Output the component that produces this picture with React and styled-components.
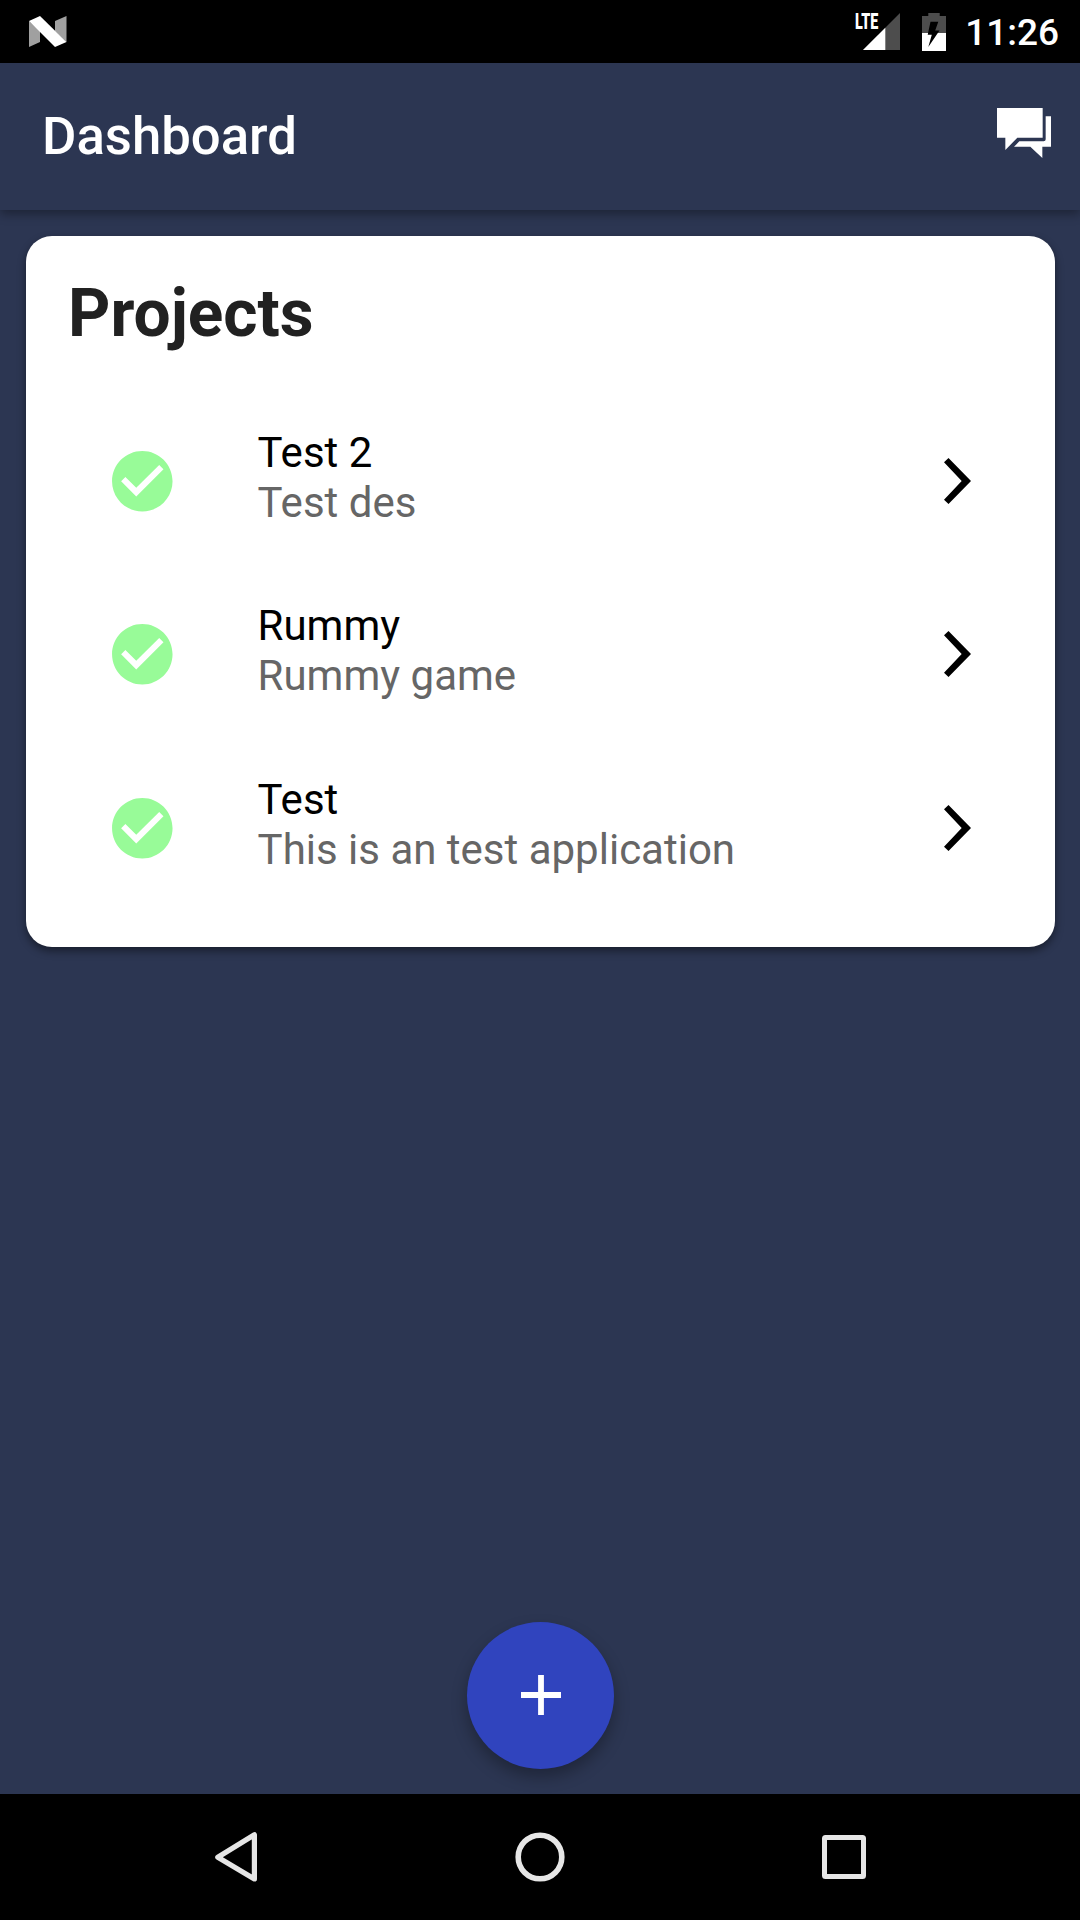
import React from "react";
import styled, { createGlobalStyle } from "styled-components";

const GlobalStyle = createGlobalStyle`
  * { box-sizing: border-box; }
  body { margin: 0; background: #2c3652; }
`;

const Screen = styled.div`
  display: flex;
  flex-direction: column;
  width: 1080px;
  height: 1920px;
  overflow: hidden;
  background: #2c3652;
  font-family: Roboto, "Liberation Sans", sans-serif;
`;

const StatusBar = styled.div`
  display: flex;
  align-items: center;
  justify-content: space-between;
  flex: none;
  height: 63px;
  padding: 0 21px 0 28px;
  background: #000;
`;

const StatusIcons = styled.div`
  display: flex;
  align-items: center;
  height: 63px;
`;

const Signal = styled.div`
  display: flex;
  align-items: flex-start;
  height: 37px;
  margin-right: 22px;
`;

const NetworkLabel = styled.span`
  width: 8px;
  color: #fff;
  font-size: 22px;
  font-weight: 900;
  line-height: 18px;
  white-space: nowrap;
  transform: scaleX(0.65);
  transform-origin: left center;
`;

const Clock = styled.span`
  margin-left: 19px;
  color: #fff;
  font-size: 37px;
  font-weight: 500;
  line-height: 44px;
  padding-top: 3px;
`;

const Header = styled.header`
  position: relative;
  display: flex;
  align-items: center;
  justify-content: space-between;
  flex: none;
  height: 147px;
  padding: 0 29px 0 42px;
  background: #2c3652;
  box-shadow: 0 4px 10px rgba(0, 0, 0, 0.35);
`;

const Title = styled.h1`
  margin: 0 0 1px;
  color: #fff;
  font-size: 52.7px;
  font-weight: 500;
  line-height: 62px;
`;

const ChatButton = styled.button`
  display: flex;
  margin: 0 0 8px;
  padding: 0;
  border: 0;
  background: none;
`;

const Content = styled.main`
  display: flex;
  flex-direction: column;
  flex: 1;
  padding: 26.3px 24.6px 25px 26.3px;
`;

const Card = styled.section`
  display: flex;
  flex-direction: column;
  height: 711px;
  padding: 39.7px 42px 0 41.7px;
  border-radius: 26px;
  background: #fff;
  box-shadow: 0 4px 8px rgba(0, 0, 0, 0.45);
`;

const CardTitle = styled.h2`
  margin: 0 0 42.4px;
  color: #212121;
  font-size: 65.8px;
  font-weight: 700;
  line-height: 76px;
`;

const ProjectRow = styled.div`
  display: flex;
  align-items: center;
  height: 173.4px;
  padding: 0 42.4px 0 38px;
`;

const ProjectText = styled.div`
  display: flex;
  flex-direction: column;
  flex: 1;
  margin: -6.6px 0 0 79px;
`;

const ProjectLine = styled.span`
  color: ${(p) => (p.$muted ? "#666" : "#000")};
  font-size: 42px;
  line-height: 50px;
`;

const FabArea = styled.div`
  display: flex;
  justify-content: center;
  margin-top: auto;
`;

const Fab = styled.button`
  display: flex;
  align-items: center;
  justify-content: center;
  width: 147px;
  height: 147px;
  padding: 0 0 1px;
  border: 0;
  border-radius: 50%;
  background: #3044be;
  box-shadow: 0 8px 16px rgba(0, 0, 0, 0.3);
`;

const NavBar = styled.nav`
  display: flex;
  align-items: center;
  justify-content: space-between;
  flex: none;
  height: 126px;
  padding: 0 214px 0 215px;
  background: #000;
`;

const projects = [
  { name: "Test 2", description: "Test des" },
  { name: "Rummy", description: "Rummy game" },
  { name: "Test", description: "This is an test application" },
];

const SystemLogo = () => (
  <svg width="39" height="31" viewBox="0 0 39 31">
    <path d="M1 5L12 15V26L1 31ZM27 5L38.5 0V26L27 15Z" fill="#a0a0a0" />
    <path d="M1 5L12 0L38.5 26L27 31Z" fill="#fff" />
  </svg>
);

const SignalIcon = () => (
  <svg width="37" height="37" viewBox="0 0 37 37">
    <path d="M37 0V37H0Z" fill="#4d4d4d" />
    <path d="M22.3 14.7V37H0Z" fill="#fff" />
  </svg>
);

const BatteryIcon = () => (
  <svg width="24" height="38" viewBox="0 0 24 38">
    <path d="M6.3 0H17.7V3H24V20H0V3H6.3Z" fill="#4d4d4d" />
    <path d="M0 20H24V38H0Z" fill="#fff" />
    <path d="M8.5 8.7H16.3L13.2 17.5H17.5L6.3 34L9.8 21.7H5.7Z" fill="#000" />
  </svg>
);

const ChatIcon = () => (
  <svg width="54" height="50" viewBox="531 324 162 150">
    <path
      d="M531 324H668V413H592L556 450V413H531ZM677 349H693V440H667V474L631 440H582L598 424H671Q677 424 677 418Z"
      fill="#fff"
    />
  </svg>
);

const CheckIcon = () => (
  <svg width="72.6" height="72.6" viewBox="0 0 24 24">
    <path
      d="M12 2C6.48 2 2 6.48 2 12s4.48 10 10 10 10-4.48 10-10S17.52 2 12 2zm-2 15l-5-5 1.41-1.41L10 14.17l7.59-7.59L19 8l-9 9z"
      fill="#98fb98"
    />
  </svg>
);

const ChevronIcon = () => (
  <svg width="27" height="46" viewBox="0 0 27 46">
    <path d="M0 4.3L4.5 0L27 23L4.5 46L0 41.7L17.7 23Z" fill="#000" />
  </svg>
);

const PlusIcon = () => (
  <svg width="40" height="40" viewBox="0 0 40 40">
    <path d="M17.1 0H22.9V17.1H40V22.9H22.9V40H17.1V22.9H0V17.1H17.1Z" fill="#fff" />
  </svg>
);

const BackIcon = () => (
  <svg width="42" height="50" viewBox="0 0 42 50">
    <path d="M2.8 25.2L39.4 2.8V46.9Z" fill="none" stroke="#e6e6e6" strokeWidth="5.2" strokeLinejoin="round" />
  </svg>
);

const HomeIcon = () => (
  <svg width="50" height="50" viewBox="0 0 50 50">
    <circle cx="25" cy="25" r="21.8" fill="none" stroke="#e6e6e6" strokeWidth="5.6" />
  </svg>
);

const RecentsIcon = () => (
  <svg width="44" height="44" viewBox="0 0 44 44">
    <path
      fillRule="evenodd"
      d="M3.5 0H40.5Q44 0 44 3.5V40.5Q44 44 40.5 44H3.5Q0 44 0 40.5V3.5Q0 0 3.5 0ZM5 5V39H39V5Z"
      fill="#e6e6e6"
    />
  </svg>
);

export default function App() {
  return (
    <Screen>
      <GlobalStyle />
      <StatusBar>
        <SystemLogo />
        <StatusIcons>
          <Signal>
            <NetworkLabel>LTE</NetworkLabel>
            <SignalIcon />
          </Signal>
          <BatteryIcon />
          <Clock>11:26</Clock>
        </StatusIcons>
      </StatusBar>
      <Header>
        <Title>Dashboard</Title>
        <ChatButton aria-label="Messages">
          <ChatIcon />
        </ChatButton>
      </Header>
      <Content>
        <Card>
          <CardTitle>Projects</CardTitle>
          {projects.map((project) => (
            <ProjectRow key={project.name}>
              <CheckIcon />
              <ProjectText>
                <ProjectLine>{project.name}</ProjectLine>
                <ProjectLine $muted>{project.description}</ProjectLine>
              </ProjectText>
              <ChevronIcon />
            </ProjectRow>
          ))}
        </Card>
        <FabArea>
          <Fab aria-label="Add project">
            <PlusIcon />
          </Fab>
        </FabArea>
      </Content>
      <NavBar>
        <BackIcon />
        <HomeIcon />
        <RecentsIcon />
      </NavBar>
    </Screen>
  );
}
